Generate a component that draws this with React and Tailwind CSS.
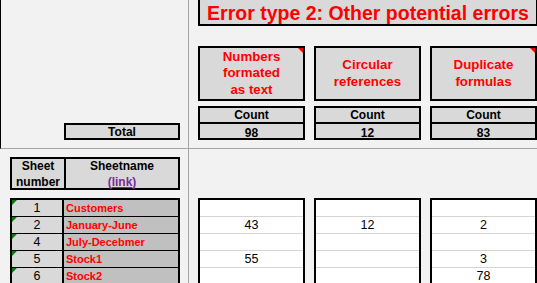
import React from "react";

const rows = [
  { n: 1, name: "Customers", a: "", b: "", c: "" },
  { n: 2, name: "January-June", a: "43", b: "12", c: "2" },
  { n: 4, name: "July-Decebmer", a: "", b: "", c: "" },
  { n: 5, name: "Stock1", a: "55", b: "", c: "3" },
  { n: 6, name: "Stock2", a: "", b: "", c: "78" },
];

const checks = [
  { title: ["Numbers", "formated", "as text"], count: 98, key: "a", note: true },
  { title: ["Circular", "references"], count: 12, key: "b", note: false },
  { title: ["Duplicate", "formulas"], count: 83, key: "c", note: true },
];

export default function App() {
  return (
    <div className="w-[537px] h-[283px] overflow-hidden bg-[#f2f2f2] font-['Liberation_Sans',Arial,sans-serif] grid grid-cols-[189px_348px] grid-rows-[149px_134px]">
      {/* top left: total label */}
      <div className="border-l border-l-black border-r border-r-[#a6a6a6] border-b border-b-[#a6a6a6] flex items-end justify-end pr-[8px] pb-[8px]">
        <div className="w-[116px] h-[17px] border-2 border-black bg-[#d9d9d9] flex items-center justify-center text-[12px] font-bold text-black">
          Total
        </div>
      </div>

      {/* top right: title, checks, counts */}
      <div className="border-b border-b-[#a6a6a6] overflow-hidden pl-[9px]">
        <div className="w-[340px] h-[26px] border-2 border-t-0 border-black bg-[#d9d9d9] flex items-center justify-center pt-[3px] text-[19.5px] font-bold text-[#ff0000] whitespace-nowrap">
          Error type 2: Other potential errors
        </div>
        <div className="mt-[20px] flex gap-[9px]">
          {checks.map((c) => (
            <div key={c.key} className="w-[107px] shrink-0">
              <div className="relative h-[55px] border-2 border-black bg-[#d9d9d9] flex flex-col items-center justify-center text-center text-[13.3px] font-bold leading-[16.5px] text-[#ff0000]">
                {c.title.map((t) => (
                  <span key={t}>{t}</span>
                ))}
                {c.note && (
                  <span className="absolute top-0 right-0 w-0 h-0 border-t-[5px] border-l-[5px] border-t-[#ff0000] border-l-transparent"></span>
                )}
              </div>
              <div className="mt-[5px] h-[34px] border-2 border-black bg-[#d9d9d9] flex flex-col text-[12px] font-bold text-black">
                <div className="h-[16px] border-b-2 border-black flex items-center justify-center">Count</div>
                <div className="flex-1 flex items-center justify-center">{c.count}</div>
              </div>
            </div>
          ))}
        </div>
      </div>

      {/* bottom left: sheet list */}
      <div className="border-r border-r-[#a6a6a6] pt-[8px] pl-[10px] overflow-hidden">
        <div className="w-[170px] h-[33px] border-2 border-black bg-[#d9d9d9] flex text-[12px] font-bold leading-[16px] text-black">
          <div className="w-[54px] border-r-2 border-black flex flex-col items-center justify-center">
            <span>Sheet</span>
            <span>number</span>
          </div>
          <div className="flex-1 flex flex-col items-center justify-center">
            <span>Sheetname</span>
            <span className="text-[#7a2a9a]">
              (<span className="underline">link</span>)
            </span>
          </div>
        </div>
        <div className="mt-[8px] w-[170px] border-2 border-b-0 border-black">
          {rows.map((r) => (
            <div key={r.n} className="h-[17px] flex border-b border-black">
              <div className="relative w-[52px] border-r-2 border-black bg-[#d9d9d9] flex items-center justify-center text-[12.5px] text-black">
                {r.n}
                <span className="absolute top-0 left-0 w-0 h-0 border-t-[5px] border-r-[5px] border-t-[#0a7a0a] border-r-transparent"></span>
              </div>
              <div className="flex-1 bg-[#c0c0c0] flex items-center pl-[2px] text-[11px] font-bold text-[#ff0000]">
                {r.name}
              </div>
            </div>
          ))}
        </div>
      </div>

      {/* bottom right: counts per sheet */}
      <div className="pt-[49px] pl-[9px] flex gap-[9px] overflow-hidden">
        {checks.map((c) => (
          <div key={c.key} className="w-[107px] shrink-0 border-2 border-b-0 border-black bg-white">
            {rows.map((r) => (
              <div key={r.n} className="h-[17px] border-b border-[#d4d4d4] flex items-center justify-center text-[12.5px] text-black">
                {r[c.key]}
              </div>
            ))}
          </div>
        ))}
      </div>
    </div>
  );
}
